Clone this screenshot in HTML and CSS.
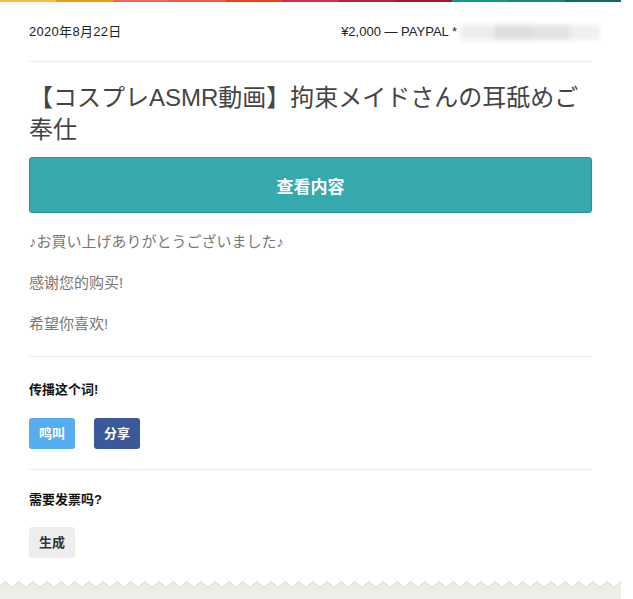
FILE: index.html
```html
<!DOCTYPE html>
<html lang="zh">
<head>
<meta charset="utf-8">
<title>Receipt</title>
<link rel="stylesheet" href="styles.css">
</head>
<body>
<div class="page">
  <div class="topbar">
    <span class="c1"></span><span class="c2"></span><span class="c3"></span><span class="c4"></span><span class="c5"></span><span class="c6"></span><span class="c7"></span><span class="c8"></span><span class="c9"></span><span class="c10"></span><span class="c11"></span>
  </div>
  <div class="card">
    <div class="header">
      <span class="date">2020年8月22日</span>
      <span class="pay">¥2,000 — PAYPAL *<span class="blur"><i class="b1"></i><i class="b2"></i><i class="b3"></i><i class="b4"></i></span></span>
    </div>
    <h1 class="title">【コスプレASMR動画】拘束メイドさんの耳舐めご奉仕</h1>
    <a class="cta">查看内容</a>
    <div class="message">
      <p>♪お買い上げありがとうございました♪</p>
      <p>感谢您的购买!</p>
      <p>希望你喜欢!</p>
    </div>
    <div class="section">
      <h4>传播这个词!</h4>
      <div class="btns">
        <a class="btn tw">鸣叫</a>
        <a class="btn fb">分享</a>
      </div>
    </div>
    <div class="section last">
      <h4>需要发票吗?</h4>
      <div class="btns">
        <a class="btn gen">生成</a>
      </div>
    </div>
  </div>
  <div class="footer">
    <svg class="zig" width="621" height="7" viewBox="0 0 621 7">
      <defs>
        <pattern id="zz" x="-2" y="0" width="14" height="7" patternUnits="userSpaceOnUse">
          <path d="M0 6.5 L7 0.5 L14 6.5 L14 7 L0 7 Z" fill="#eeeee8"/>
          <path d="M0 6.5 L7 0.5 L14 6.5" fill="none" stroke="#d6d6cf" stroke-width="1"/>
        </pattern>
      </defs>
      <rect width="621" height="7" fill="url(#zz)"/>
    </svg>
    <div class="footer-fill"></div>
  </div>
</div>
</body>
</html>
```

FILE: styles.css
```css
html, body {
  margin: 0;
  padding: 0;
  background: #ffffff;
}
body {
  font-family: "Liberation Sans", "Noto Sans CJK SC", sans-serif;
  color: #222;
}
.page {
  width: 621px;
  background: #fff;
}
.topbar {
  display: flex;
  height: 2px;
}
.topbar span { flex: 1; }
.c1 { background: #f7bb43; }
.c2 { background: #f39c12; }
.c3 { background: #e8685a; }
.c4 { background: #ee5a45; }
.c5 { background: #e8411c; }
.c6 { background: #d0304a; }
.c7 { background: #b5233a; }
.c8 { background: #9b1b25; }
.c9 { background: #14958f; }
.c10 { background: #1e8479; }
.c11 { background: #0f6a63; }

.card {
  padding: 0 29px;
}
.header {
  display: flex;
  justify-content: space-between;
  align-items: center;
  font-size: 13px;
  line-height: 20px;
  padding: 20px 0 19px;
  border-bottom: 1px solid #eeeeee;
  color: #222;
}
.date {
  letter-spacing: 0.3px;
}
.pay {
  display: flex;
  align-items: center;
  margin-right: -8px;
}
.blur {
  display: flex;
  width: 140px;
  height: 15px;
  margin-left: 3px;
  filter: blur(2.5px);
}
.blur i { display: block; height: 100%; }
.b1 { width: 34px; background: #ededed; }
.b2 { width: 38px; background: #dedede; }
.b3 { width: 38px; background: #e3e3e3; }
.b4 { width: 30px; background: #f0f0f2; }

.title {
  font-family: "Liberation Sans", "Noto Sans CJK JP", sans-serif;
  font-weight: normal;
  font-size: 24px;
  line-height: 32px;
  color: #444;
  margin: 20px 0 11px;
}
.cta {
  display: flex;
  justify-content: center;
  align-items: center;
  height: 54px;
  background: #36a9ae;
  border: 1px solid #2c9196;
  border-radius: 3px;
  color: #fff;
  font-weight: bold;
  font-size: 17px;
}
.message {
  margin-top: 17px;
  padding-bottom: 20px;
  border-bottom: 1px solid #eeeeee;
  color: #777;
  font-size: 15px;
  line-height: 24px;
}
.message p {
  margin: 0 0 17px;
}
.message p:last-child { margin-bottom: 0; }

.section {
  padding: 23px 0 20px;
  border-bottom: 1px solid #eeeeee;
}
.section.last {
  padding: 20px 0 23px;
  border-bottom: none;
}
.section h4 {
  margin: 0 0 18px;
  font-size: 13px;
  line-height: 20px;
  font-weight: bold;
  color: #111;
}
.section.last h4 { margin-bottom: 17px; }
.btns {
  display: flex;
  gap: 19px;
}
.btn {
  display: block;
  height: 31px;
  line-height: 31px;
  padding: 0 10px;
  border-radius: 3px;
  font-size: 13px;
  font-weight: bold;
  color: #fff;
}
.tw { background: #55acee; }
.fb { background: #3b5998; }
.gen { background: #eeeeee; color: #333; }

.footer {
  display: flex;
  flex-direction: column;
}
.zig { display: block; }
.footer-fill {
  height: 12px;
  background: #eeeee8;
}
```
